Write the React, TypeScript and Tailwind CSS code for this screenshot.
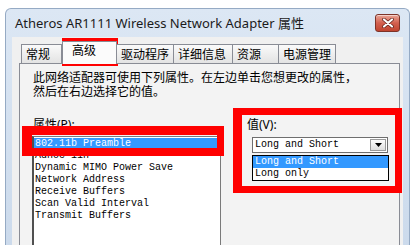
export default function App() {
  const items = [
    "802.11b Preamble",
    "Adhoc 11n",
    "Dynamic MIMO Power Save",
    "Network Address",
    "Receive Buffers",
    "Scan Valid Interval",
    "Transmit Buffers",
  ];
  const tabs = [
    { t: "常规", w: "w-[41px]", sel: false },
    { t: "高级", w: "w-[55px]", sel: true },
    { t: "驱动程序", w: "w-[58px]", sel: false },
    { t: "详细信息", w: "w-[60px]", sel: false },
    { t: "资源", w: "w-[47px]", sel: false },
    { t: "电源管理", w: "w-[58px]", sel: false },
  ];
  return (
    <div className="relative w-[412px] h-[245px] overflow-hidden bg-white pt-[8px] pl-[5px] font-['Noto_Sans','Noto_Sans_CJK_SC',sans-serif] text-black">
      <div className="w-[405px] h-[260px] rounded-t-[6px] border border-b-0 border-[#95aac4] bg-linear-to-b from-[#dce7f4] to-[#cad9eb] flex flex-col">
        {/* title bar */}
        <div className="shrink-0 h-[28px] flex items-center justify-between pl-[9px] pr-[9px]">
          <span className="text-[13px] leading-[14px] text-[#1b1b1b] whitespace-nowrap">
            Atheros AR1111 Wireless Network Adapter 属性
          </span>
          <div className="w-[25px] h-[18px] rounded-[3px] border border-[#7d3328] bg-linear-to-b from-[#e9a597] via-[#d2604f] to-[#c0442f] flex items-center justify-center shadow-[inset_0_1px_0_rgba(255,255,255,0.5)]">
            <svg width="12" height="10" viewBox="0 0 12 10">
              <path d="M2 1.5 L10 8.5 M10 1.5 L2 8.5" stroke="#5a1d16" strokeWidth="3.6" strokeLinecap="round" />
              <path d="M2 1.5 L10 8.5 M10 1.5 L2 8.5" stroke="#ffffff" strokeWidth="2.2" strokeLinecap="round" />
            </svg>
          </div>
        </div>
        {/* client area */}
        <div className="flex-1 mx-[6px] bg-[#f0f0f0] pt-[4px] pl-[7px] pr-[3px] flex flex-col">
          <div className="shrink-0 flex items-end h-[23px] pl-[2px] -mb-px relative z-10">
            {tabs.map((tab) =>
              tab.sel ? (
                <div
                  key={tab.t}
                  className={`${tab.w} h-[23px] bg-[#fbfbfb] border border-b-0 border-[#898c95] pl-[9px] pt-[2px] text-[12px] leading-[14px] whitespace-nowrap`}
                >
                  {tab.t}
                </div>
              ) : (
                <div
                  key={tab.t}
                  className={`${tab.w} h-[20px] -ml-px first:ml-0 bg-linear-to-b from-[#fafafa] to-[#e3e3e3] border border-[#898c95] pl-[4px] pt-[3px] text-[12px] leading-[14px] whitespace-nowrap`}
                >
                  {tab.t}
                </div>
              )
            )}
          </div>
          <div className="flex-1 border border-[#898c95] bg-[#f3f3f3] flex flex-col">
            <div className="shrink-0 ml-[13px] mt-[7px] text-[12px] leading-[14px] whitespace-nowrap">
              <div>此网络适配器可使用下列属性。在左边单击您想更改的属性，</div>
              <div>然后在右边选择它的值。</div>
            </div>
            <div className="shrink-0 flex mt-[19px]">
              {/* left column */}
              <div className="ml-[12px] w-[189px] flex flex-col">
                <div className="pl-[1px] text-[12px] leading-[14px] whitespace-nowrap">属性(P):</div>
                <div className="mt-[4px] h-[120px] bg-white border border-[#7a7a7a] border-l-2 border-l-[#505050] pt-[1px] font-['Liberation_Mono',monospace] text-[10px]">
                  {items.map((it, i) => (
                    <div
                      key={it}
                      className={`h-[12px] leading-[12px] pl-[1px] whitespace-pre ${i === 0 ? "bg-[#3399ff] text-white" : "text-black"}`}
                    >
                      {it}
                    </div>
                  ))}
                </div>
              </div>
              {/* right column */}
              <div className="ml-[26px] flex flex-col">
                <div className="text-[12px] leading-[14px] whitespace-nowrap">值(V):</div>
                <div className="relative ml-[5px] mt-[5px] w-[136px] h-[16px] bg-white border border-[#6e6e6e] flex items-center">
                  <span className="pl-[2px] font-['Liberation_Mono',monospace] text-[10px] leading-[12px] whitespace-pre">
                    Long and Short
                  </span>
                  <div className="ml-auto mr-[1px] w-[16px] h-[12px] bg-linear-to-b from-[#fdfdfd] to-[#dedede] border border-[#9a9a9a] flex items-center justify-center">
                    <svg width="7" height="4" viewBox="0 0 7 4">
                      <path d="M0 0 H7 L3.5 4 Z" fill="#000" />
                    </svg>
                  </div>
                  <div className="absolute left-[-1px] top-[17px] w-[137px] border border-black bg-white font-['Liberation_Mono',monospace] text-[10px]">
                    <div className="h-[12px] leading-[12px] pl-[2px] bg-[#3399ff] text-white whitespace-pre">Long and Short</div>
                    <div className="h-[12px] leading-[12px] pl-[2px] whitespace-pre">Long only</div>
                  </div>
                </div>
              </div>
            </div>
          </div>
        </div>
      </div>
      {/* red annotation boxes */}
      <div className="absolute left-[62px] top-[38px] w-[56px] h-[28px] border-l-[6px] border-r-[8px] border-y-[7px] border-[#ff0000]" />
      <div className="absolute left-[22px] top-[126px] w-[202px] h-[30px] border-l-[10px] border-t-[9px] border-r-[7px] border-b-[8px] border-[#ff0000]" />
      <div className="absolute left-[233px] top-[108px] w-[169px] h-[85px] border-l-[9px] border-t-[7px] border-r-[7px] border-b-[7px] border-[#ff0000]" />
    </div>
  );
}
